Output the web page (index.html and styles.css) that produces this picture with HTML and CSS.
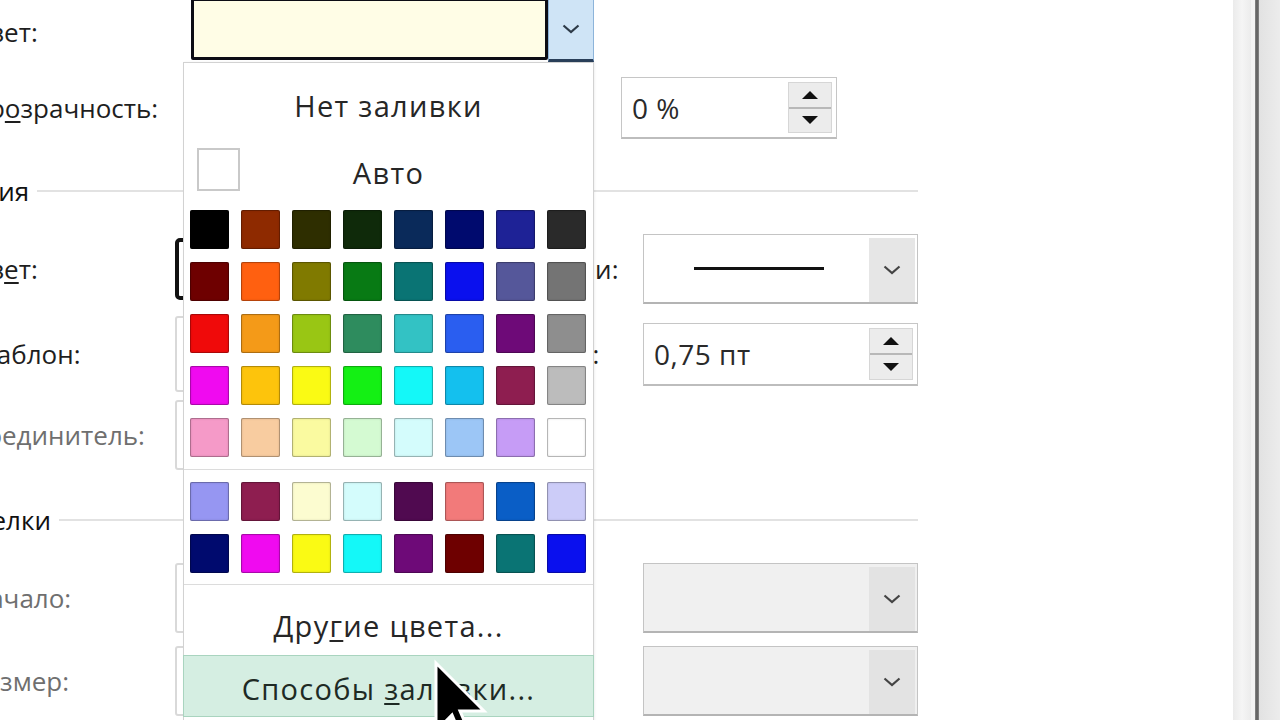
FILE: index.html
```html
<!DOCTYPE html>
<html lang="ru">
<head>
<meta charset="utf-8">
<title>Формат</title>
<link rel="stylesheet" href="styles.css">
</head>
<body>
<div class="screen">
  <div class="form">
    <div class="inner">
      <div class="row row-fill">
        <span class="label l-top">Цвет:</span>
        <div class="fill-field"></div>
        <div class="fill-btn"><svg width="18" height="10" viewBox="0 0 18 10"><polyline points="1.5,1.5 9,8 16.5,1.5" fill="none" stroke="#2d3a48" stroke-width="2.2"/></svg></div>
      </div>
      <div class="row row-transp">
        <span class="label l-fill">Пр<u>о</u>зрачность:</span>
        <div class="slider"></div>
        <div class="spin spin-transp">
          <span class="spin-val">0 %</span>
          <div class="spin-btns">
            <div class="sb"><span class="tri-up"></span></div>
            <div class="sb"><span class="tri-down"></span></div>
          </div>
        </div>
      </div>
      <div class="heading h-line"><span class="h-text">Линия</span><span class="h-rule"></span></div>
      <div class="row row-linecolor">
        <span class="label">Цв<u>е</u>т:</span>
        <div class="lctrl lctrl-dark"></div>
        <span class="rlabel">Тип линии:</span>
        <div class="combo">
          <div class="combo-field"><span class="line-sample"></span></div>
          <div class="combo-btn"><svg width="18" height="10" viewBox="0 0 18 10"><polyline points="1.5,1.5 9,8 16.5,1.5" fill="none" stroke="#444" stroke-width="2.2"/></svg></div>
        </div>
      </div>
      <div class="row row-pattern">
        <span class="label">Шаблон:</span>
        <div class="lctrl"></div>
        <span class="rlabel">Толщина:</span>
        <div class="spin spin-weight">
          <span class="spin-val">0,75 пт</span>
          <div class="spin-btns">
            <div class="sb"><span class="tri-up"></span></div>
            <div class="sb"><span class="tri-down"></span></div>
          </div>
        </div>
      </div>
      <div class="row row-conn">
        <span class="label disabled">Соединитель:</span>
        <div class="lctrl"></div>
      </div>
      <div class="heading h-arrows"><span class="h-text">Стрелки</span><span class="h-rule"></span></div>
      <div class="row row-begin">
        <span class="label disabled">Начало:</span>
        <div class="lctrl"></div>
        <span class="rlabel disabled">Конец:</span>
        <div class="combo combo-off">
          <div class="combo-field"></div>
          <div class="combo-btn"><svg width="18" height="10" viewBox="0 0 18 10"><polyline points="1.5,1.5 9,8 16.5,1.5" fill="none" stroke="#444" stroke-width="2.2"/></svg></div>
        </div>
      </div>
      <div class="row row-size">
        <span class="label disabled">Размер:</span>
        <div class="lctrl"></div>
        <span class="rlabel disabled">Размер:</span>
        <div class="combo combo-off">
          <div class="combo-field"></div>
          <div class="combo-btn"><svg width="18" height="10" viewBox="0 0 18 10"><polyline points="1.5,1.5 9,8 16.5,1.5" fill="none" stroke="#444" stroke-width="2.2"/></svg></div>
        </div>
      </div>
    </div>
  </div>
  <div class="edge">
    <div class="edge-light"></div>
    <div class="edge-gap"></div>
    <div class="edge-dark"></div>
    <div class="edge-rest"></div>
  </div>
</div>

<div class="menu">
  <div class="mi mi-nofill"><span>Нет заливки</span></div>
  <div class="mi-auto"><span class="auto-box"></span><span class="auto-text">Авто</span></div>
  <div class="palette">
    <span class="sw" style="background:#000000"></span>
    <span class="sw" style="background:#8e2a00"></span>
    <span class="sw" style="background:#2e2e00"></span>
    <span class="sw" style="background:#0f2a0a"></span>
    <span class="sw" style="background:#0a2a5a"></span>
    <span class="sw" style="background:#000a6e"></span>
    <span class="sw" style="background:#1e2296"></span>
    <span class="sw" style="background:#2a2a2a"></span>

    <span class="sw" style="background:#6e0000"></span>
    <span class="sw" style="background:#ff6010"></span>
    <span class="sw" style="background:#807a00"></span>
    <span class="sw" style="background:#087a14"></span>
    <span class="sw" style="background:#0a7474"></span>
    <span class="sw" style="background:#0a10ee"></span>
    <span class="sw" style="background:#55579a"></span>
    <span class="sw" style="background:#747474"></span>

    <span class="sw" style="background:#f00a0a"></span>
    <span class="sw" style="background:#f49a18"></span>
    <span class="sw" style="background:#99c614"></span>
    <span class="sw" style="background:#2e8c5e"></span>
    <span class="sw" style="background:#33c2c4"></span>
    <span class="sw" style="background:#2a5ef0"></span>
    <span class="sw" style="background:#6e0a78"></span>
    <span class="sw" style="background:#8e8e8e"></span>

    <span class="sw" style="background:#f00af0"></span>
    <span class="sw" style="background:#fdc40c"></span>
    <span class="sw" style="background:#fafa14"></span>
    <span class="sw" style="background:#14f014"></span>
    <span class="sw" style="background:#14f8f8"></span>
    <span class="sw" style="background:#14c0ee"></span>
    <span class="sw" style="background:#8e1e50"></span>
    <span class="sw" style="background:#bcbcbc"></span>

    <span class="sw" style="background:#f59ac8"></span>
    <span class="sw" style="background:#f8cca0"></span>
    <span class="sw" style="background:#fafaa0"></span>
    <span class="sw" style="background:#d4fad2"></span>
    <span class="sw" style="background:#d4fcfc"></span>
    <span class="sw" style="background:#9cc6f6"></span>
    <span class="sw" style="background:#c69cf6"></span>
    <span class="sw" style="background:#ffffff"></span>
  </div>
  <div class="msep"></div>
  <div class="palette recent">
    <span class="sw" style="background:#9696f2"></span>
    <span class="sw" style="background:#8e1e50"></span>
    <span class="sw" style="background:#fcfcd0"></span>
    <span class="sw" style="background:#d4fcfc"></span>
    <span class="sw" style="background:#500a50"></span>
    <span class="sw" style="background:#f27a7a"></span>
    <span class="sw" style="background:#0a5ec6"></span>
    <span class="sw" style="background:#ccccf8"></span>

    <span class="sw" style="background:#000a6e"></span>
    <span class="sw" style="background:#f00af0"></span>
    <span class="sw" style="background:#fafa14"></span>
    <span class="sw" style="background:#14f8f8"></span>
    <span class="sw" style="background:#6e0a78"></span>
    <span class="sw" style="background:#6e0000"></span>
    <span class="sw" style="background:#0a7474"></span>
    <span class="sw" style="background:#0a10ee"></span>
  </div>
  <div class="msep"></div>
  <div class="mi mi-more"><span>Дру<u>г</u>ие цвета...</span></div>
  <div class="mi mi-ways"><span>Способы <u>з</u>аливки...</span></div>
</div>

<svg class="cursor" width="60" height="92" viewBox="0 0 60 92"><polygon points="4,4 4,72 20,56 32,84 40,80 28,52 52,52" fill="#000" stroke="#fff" stroke-width="3" stroke-linejoin="miter"/></svg>
</body>
</html>
```

FILE: styles.css
```css
* { box-sizing: border-box; }
html, body { margin: 0; padding: 0; }
body {
  width: 1280px;
  height: 720px;
  overflow: hidden;
  background: #fff;
  font-family: "Open Sans", "Noto Sans", "DejaVu Sans", sans-serif;
  font-size: 26px;
  color: #1e1e1e;
  position: relative;
}
u { text-decoration-thickness: 2px; text-underline-offset: 3px; }

.screen { display: flex; height: 720px; }
.form { flex: 0 0 1233px; overflow: hidden; background: #fff; }
.inner { margin-top: -2px; }

.edge { flex: 1; display: flex; }
.edge-light { width: 18px; background: linear-gradient(to right, #ebebeb, #f5f5f5 50%, #ececec); }
.edge-gap { width: 4px; background: #f4f4f4; }
.edge-dark { width: 4px; background: linear-gradient(to right, #8a8a8a, #5c5c5c, #8a8a8a); }
.edge-rest { flex: 1; background: linear-gradient(to right, #e2e2e2, #ececec); }

.row { display: flex; align-items: center; }
.label {
  flex: 0 0 205px;
  margin-left: -30px;
  white-space: nowrap;
}
.label.l-fill { flex-basis: 221px; }
.label.l-top { flex-basis: 221px; align-self: center; padding-top: 4px; }
.disabled { color: #6f6f6f; }

/* fill color */
.row-fill { height: 64px; align-items: stretch; }
.fill-field {
  width: 357px;
  height: 62px;
  background: #fffde6;
  border: 3px solid #0c0c14;
  border-radius: 2px;
}
.fill-btn {
  width: 46px;
  height: 64px;
  background: #cfe4f6;
  border: 1px solid #8db4da;
  border-bottom: 3px solid #2a3f5a;
  display: flex;
  align-items: center;
  justify-content: center;
}

.row-transp { height: 62px; margin-top: 15px; }
.slider { width: 404px; height: 30px; }
.spin {
  display: flex;
  align-items: center;
  border: 1px solid #c6c6c6;
  border-bottom: 2px solid #bdbdbd;
  background: #fff;
  height: 62px;
}
.spin-transp { width: 216px; margin-left: 26px; }
.spin-val { flex: 1; padding-left: 10px; color: #2a2a2a; font-size: 28px; letter-spacing: 0.5px; }
.spin-btns {
  width: 44px;
  align-self: stretch;
  margin: 4px 4px 4px 0;
  display: flex;
  flex-direction: column;
  background: #ececec;
  border: 1px solid #d6d6d6;
}
.sb { flex: 1; display: flex; align-items: center; justify-content: center; }
.sb + .sb { border-top: 2px solid #b8b8b8; }
.tri-up { width: 0; height: 0; border-left: 8px solid transparent; border-right: 8px solid transparent; border-bottom: 8px solid #111; }
.tri-down { width: 0; height: 0; border-left: 8px solid transparent; border-right: 8px solid transparent; border-top: 8px solid #111; }

/* headings */
.heading { display: flex; align-items: center; height: 40px; width: 918px; white-space: nowrap; }
.h-text { margin-left: -53px; color: #111; }
.h-rule { flex: 1; height: 2px; background: #e2e2e2; margin-left: 8px; }
.h-line { margin-top: 32px; }
.h-arrows { margin-top: 30px; }
.h-arrows .h-text { margin-left: -53px; }

/* line rows */
.lctrl {
  width: 295px;
  align-self: stretch;
  border: 2px solid #d9d9d9;
  border-radius: 3px;
  background: #fff;
}
.lctrl-dark { border: 4px solid #111; margin: 4px 0; border-radius: 5px; }
.rlabel { width: 173px; padding-left: 7px; white-space: nowrap; }

.row-linecolor { height: 70px; margin-top: 23px; }
.combo {
  width: 275px;
  align-self: stretch;
  display: flex;
  border: 1px solid #c4c4c4;
  border-bottom: 2px solid #b4b4b4;
  background: #fff;
}
.combo-field { flex: 1; display: flex; align-items: center; justify-content: center; }
.combo-btn {
  width: 46px;
  margin: 3px 2px 0 0;
  background: #e6e6e6;
  display: flex;
  align-items: center;
  justify-content: center;
}
.line-sample { width: 130px; height: 3px; background: #111; margin-left: 4px; }
.combo-off { background: #f0f0f0; }
.combo-off .combo-btn { background: #e3e3e3; }

.row-pattern { height: 76px; margin-top: 12px; }
.spin-weight { width: 275px; height: 63px; margin-top: 1px; }

.row-conn { height: 70px; margin-top: 8px; }

.row-begin { height: 70px; margin-top: 23px; }
.row-size { height: 70px; margin-top: 13px; }

/* dropdown menu */
.menu {
  position: absolute;
  left: 183px;
  top: 62px;
  width: 411px;
  height: 670px;
  background: #fff;
  border: 1px solid #d2d2d2;
  box-shadow: 1px 0 2px rgba(0,0,0,0.06);
  display: flex;
  flex-direction: column;
  color: #262626;
  font-size: 29px;
  letter-spacing: 1.3px;
}
.mi { display: flex; align-items: center; justify-content: center; white-space: nowrap; }
.mi-nofill { height: 84px; }
.mi-auto {
  height: 50px;
  display: grid;
  grid-template-columns: 1fr;
  align-items: center;
}
.mi-auto > * { grid-area: 1 / 1; }
.auto-box {
  justify-self: start;
  align-self: start;
  width: 43px;
  height: 43px;
  margin-left: 13px;
  margin-top: 1px;
  border: 2px solid #c9c9c9;
  background: #fff;
}
.auto-text { justify-self: center; }

.palette {
  display: grid;
  grid-template-columns: repeat(8, 39px);
  grid-auto-rows: 39px;
  column-gap: 12px;
  row-gap: 13px;
  padding-left: 6px;
  margin-top: 13px;
}
.sw {
  display: block;
  border-radius: 2px;
  box-shadow: inset 0 0 0 1px rgba(0,0,0,0.22), inset 0 0 3px rgba(0,0,0,0.25);
}
.msep { height: 1px; background: #dcdcdc; margin-top: 12px; }
.recent { margin-top: 12px; }
.palette.recent + .msep { margin-top: 11px; }
.mi-more { height: 70px; padding-top: 10px; }
.mi-ways {
  height: 62px;
  margin: 0 -1px;
  background: #d5eee2;
  border: 1px solid #a9d4bf;
  color: #1e2a24;
  padding-top: 4px;
}

.cursor { position: absolute; left: 432px; top: 659px; }
```
